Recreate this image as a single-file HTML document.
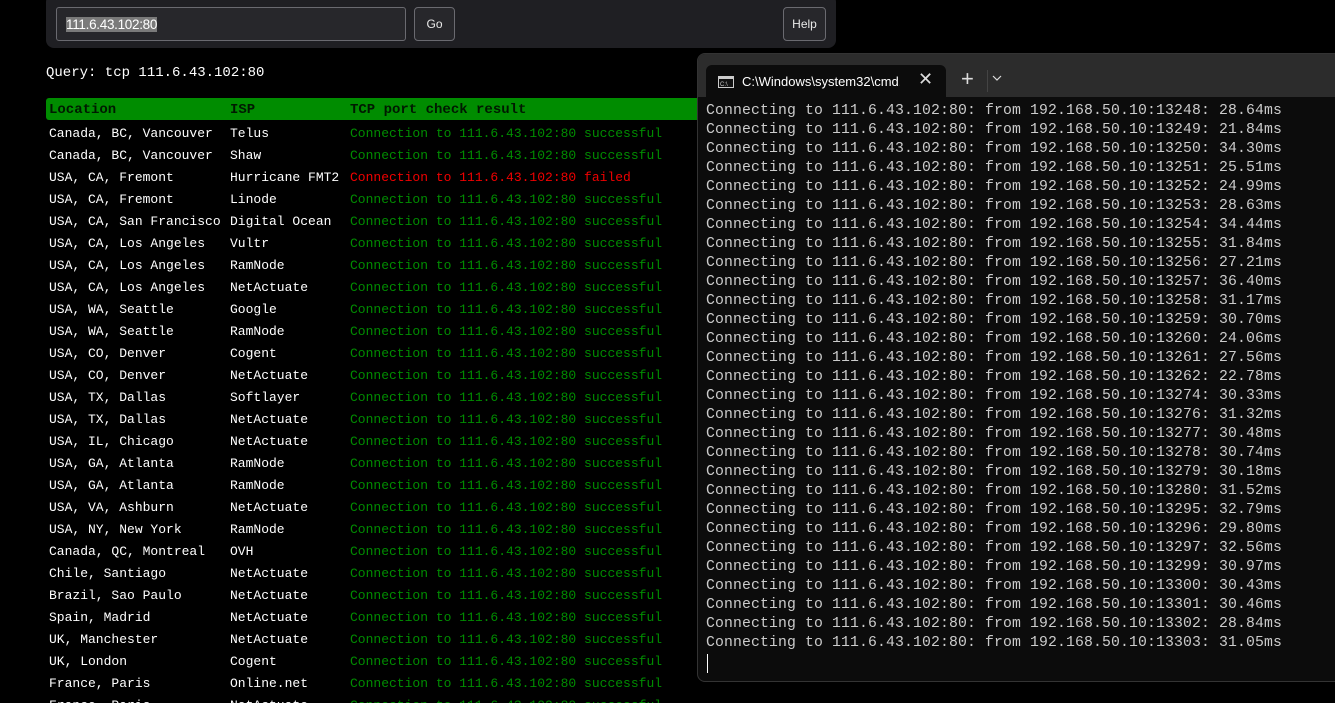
<!DOCTYPE html>
<html><head><style>
html{overflow:hidden}
body{margin:0;width:1335px;height:703px;background:#000;overflow:hidden;position:relative;font-family:"Liberation Mono",monospace;}
.top{position:absolute;left:46px;top:-6px;width:790px;height:54px;background:#1f1f23;border-radius:8px;}
.inp{position:absolute;left:56px;top:7px;width:348px;height:32px;border:1px solid #6a6a70;border-radius:3px;background:#27272b;}
.inp span{position:absolute;left:9px;top:9px;font:13.5px "Liberation Sans",sans-serif;color:#fff;background:#7a7a7a;letter-spacing:-0.3px;line-height:15px}
.btn{position:absolute;top:7px;height:32px;border:1px solid #6a6a70;border-radius:4px;background:#27272b;color:#e8e8e8;font:12px "Liberation Sans",sans-serif;line-height:32px;text-align:center}
.q{position:absolute;left:46px;top:65px;color:#fff;font-size:14px;}
.hdr{position:absolute;left:46px;top:98px;width:660px;height:22px;background:#008c00;border-radius:3px 0 0 3px}
.row{position:absolute;left:49px;font-size:13px;height:22px;line-height:22px;white-space:pre;color:#fff}
.row b{position:absolute;top:0;font-weight:normal}
.hdr .row{left:3px;top:1px;font-size:14px}
.hdr .row b{font-weight:bold;color:#001a00}
.term{position:absolute;left:697px;top:53px;width:650px;height:627px;background:#0c0c0c;border:1px solid #333;border-radius:8px;overflow:hidden}
.bar{position:absolute;left:0;top:0;right:0;height:43px;background:#2c2c2c}
.tab{position:absolute;left:8px;top:11px;width:240px;height:33px;background:#0c0c0c;border-radius:6px 6px 0 0}
.tab .t{position:absolute;left:36px;top:9px;font:13px "Liberation Sans",sans-serif;color:#fff;width:158px;overflow:hidden;white-space:nowrap}
.lines{position:absolute;left:8px;top:48px;font-size:14.8px;letter-spacing:0.12px;line-height:19px;color:#cccccc;white-space:pre}
</style></head><body>
<div class="top"></div>
<div class="inp"><span>111.6.43.102:80</span></div>
<div class="btn" style="left:414px;width:39px">Go</div>
<div class="btn" style="left:783px;width:41px">Help</div>
<div class="q">Query: tcp 111.6.43.102:80</div>
<div class="hdr"><div class="row"><b style="left:0">Location</b><b style="left:181px">ISP</b><b style="left:301px">TCP port check result</b></div></div>
<div id="rows"></div>
<script>
var d=[["Canada, BC, Vancouver","Telus"],["Canada, BC, Vancouver","Shaw"],["USA, CA, Fremont","Hurricane FMT2",1],["USA, CA, Fremont","Linode"],["USA, CA, San Francisco","Digital Ocean"],["USA, CA, Los Angeles","Vultr"],["USA, CA, Los Angeles","RamNode"],["USA, CA, Los Angeles","NetActuate"],["USA, WA, Seattle","Google"],["USA, WA, Seattle","RamNode"],["USA, CO, Denver","Cogent"],["USA, CO, Denver","NetActuate"],["USA, TX, Dallas","Softlayer"],["USA, TX, Dallas","NetActuate"],["USA, IL, Chicago","NetActuate"],["USA, GA, Atlanta","RamNode"],["USA, GA, Atlanta","RamNode"],["USA, VA, Ashburn","NetActuate"],["USA, NY, New York","RamNode"],["Canada, QC, Montreal","OVH"],["Chile, Santiago","NetActuate"],["Brazil, Sao Paulo","NetActuate"],["Spain, Madrid","NetActuate"],["UK, Manchester","NetActuate"],["UK, London","Cogent"],["France, Paris","Online.net"],["France, Paris","NetActuate"]];
var h="";d.forEach(function(r,i){h+='<div class="row" style="top:'+(123+i*22)+'px"><b style="left:0">'+r[0]+'</b><b style="left:181px">'+r[1]+'</b><b style="left:301px;color:'+(r[2]?'#f00000':'#008c00')+'">Connection to 111.6.43.102:80 '+(r[2]?'failed':'successful')+'</b></div>'});
document.getElementById("rows").innerHTML=h;
</script>
<div class="term">
<div class="bar"></div>
<div class="tab">
<svg style="position:absolute;left:12px;top:11px" width="16" height="12"><rect x="0.5" y="0.5" width="15" height="11" fill="#111" stroke="#ccc"/><rect x="1" y="1" width="14" height="2" fill="#ccc"/><text x="2" y="10" font-size="6" fill="#ccc" font-family="Liberation Sans">C:\_</text></svg>
<div class="t">C:\Windows\system32\cmd.exe</div>
<div style="position:absolute;left:212px;top:4px;color:#ddd;font:18px 'Liberation Sans',sans-serif">✕</div>
</div>
<div style="position:absolute;left:263px;top:12px;color:#ddd;font:22px 'Liberation Sans',sans-serif">+</div>
<div style="position:absolute;left:289px;top:16px;width:1px;height:22px;background:#444"></div>
<svg style="position:absolute;left:294px;top:20px" width="10" height="8"><path d="M1 2 L5 6 L9 2" stroke="#ddd" fill="none" stroke-width="1.2"/></svg>
<div class="lines" id="ln"></div>
<div style="position:absolute;left:9px;top:600px;width:1px;height:19px;background:#fff"></div>
</div>
<script>
var p=["13248: 28.64","13249: 21.84","13250: 34.30","13251: 25.51","13252: 24.99","13253: 28.63","13254: 34.44","13255: 31.84","13256: 27.21","13257: 36.40","13258: 31.17","13259: 30.70","13260: 24.06","13261: 27.56","13262: 22.78","13274: 30.33","13276: 31.32","13277: 30.48","13278: 30.74","13279: 30.18","13280: 31.52","13295: 32.79","13296: 29.80","13297: 32.56","13299: 30.97","13300: 30.43","13301: 30.46","13302: 28.84","13303: 31.05"];
document.getElementById("ln").textContent=p.map(function(s){return "Connecting to 111.6.43.102:80: from 192.168.50.10:"+s+"ms"}).join("\n");
</script>
</body></html>
